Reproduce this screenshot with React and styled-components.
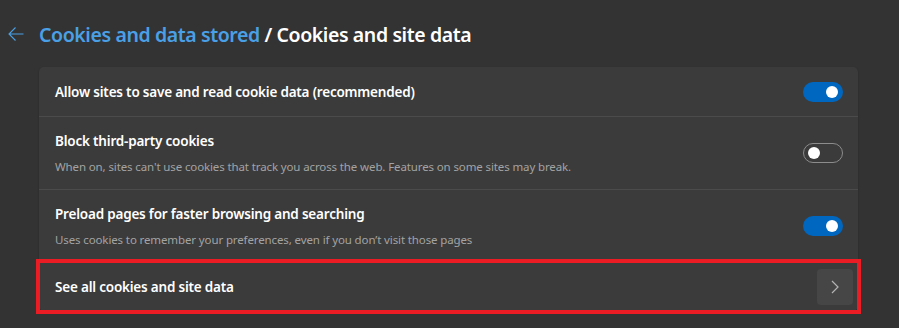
import styled, { createGlobalStyle } from 'styled-components';

const GlobalStyle = createGlobalStyle`
  html, body {
    margin: 0;
    padding: 0;
    background: #333333;
  }
  body {
    font-family: "Noto Sans", "Open Sans", sans-serif;
    color: #ffffff;
  }
`;

const Page = styled.div`
  width: 899px;
  height: 328px;
  box-sizing: border-box;
  padding: 19px 41px 0 8px;
  background: #333333;
  overflow: hidden;
`;

const Header = styled.div`
  display: flex;
  align-items: center;
  height: 30px;
  gap: 15px;
`;

const BackButton = styled.button`
  display: flex;
  align-items: center;
  justify-content: center;
  width: 16px;
  height: 16px;
  padding: 0;
  border: none;
  background: none;
  color: #4aa0e6;
  cursor: pointer;
`;

const Title = styled.h1`
  margin: 0;
  font-size: 19.5px;
  font-weight: 600;
  letter-spacing: -0.4px;
  color: #ffffff;
`;

const Crumb = styled.span`
  color: #4aa0e6;
`;

const Card = styled.div`
  margin: 18px 0 0 31px;
  background: #3b3b3b;
  border-radius: 5px;
  box-shadow: 0 1px 2px rgba(0, 0, 0, 0.25);
`;

const Row = styled.div`
  display: flex;
  align-items: center;
  justify-content: space-between;
  min-height: ${(p) => (p.$tall ? '73px' : '49px')};
  box-sizing: border-box;
  padding: 0 15px 0 16px;
  border-top: ${(p) => (p.$first ? 'none' : '1px solid #4b4b4b')};
  ${(p) => p.$highlight && `outline: 4px solid #ec1c24; outline-offset: -1px; border-top-color: transparent;`}
`;

const Text = styled.div`
  display: flex;
  flex-direction: column;
  gap: 9px;
`;

const Label = styled.div`
  font-size: 13.5px;
  font-weight: 600;
  line-height: 18px;
  letter-spacing: -0.2px;
  color: #ffffff;
`;

const Description = styled.div`
  font-size: 11.5px;
  line-height: 16px;
  letter-spacing: -0.12px;
  color: #a3a3a3;
`;

const Toggle = styled.div`
  position: relative;
  flex: none;
  width: 40px;
  height: 20px;
  box-sizing: border-box;
  border-radius: 10px;
  background: ${(p) => (p.$on ? '#0067c0' : 'transparent')};
  border: ${(p) => (p.$on ? 'none' : '1px solid #8c8c8c')};

  &::after {
    content: '';
    position: absolute;
    top: 50%;
    width: 12px;
    height: 12px;
    margin-top: -6px;
    border-radius: 50%;
    background: #ffffff;
    ${(p) => (p.$on ? 'right: 5px;' : 'left: 4px;')}
  }
`;

const ChevronButton = styled.button`
  display: flex;
  align-items: center;
  justify-content: center;
  width: 36px;
  height: 36px;
  margin-right: -10px;
  padding: 0;
  border: none;
  border-radius: 4px;
  background: #464646;
  color: #b4b4b4;
`;

const settings = [
  { label: 'Allow sites to save and read cookie data (recommended)', on: true },
  {
    label: 'Block third-party cookies',
    desc: "When on, sites can't use cookies that track you across the web. Features on some sites may break.",
    on: false,
  },
  {
    label: 'Preload pages for faster browsing and searching',
    desc: 'Uses cookies to remember your preferences, even if you don\u2019t visit those pages',
    on: true,
  },
];

export default function App() {
  return (
    <Page>
      <GlobalStyle />
      <Header>
        <BackButton aria-label="Back">
          <svg width="16" height="16" viewBox="0 0 16 16" fill="none" stroke="currentColor" strokeWidth="1.1">
            <path d="M15.5 8H1M7.5 1.5L1 8l6.5 6.5" />
          </svg>
        </BackButton>
        <Title>
          <Crumb>Cookies and data stored</Crumb> / Cookies and site data
        </Title>
      </Header>
      <Card>
        {settings.map((s, i) => (
          <Row key={s.label} $first={i === 0} $tall={!!s.desc}>
            <Text>
              <Label>{s.label}</Label>
              {s.desc && <Description>{s.desc}</Description>}
            </Text>
            <Toggle $on={s.on} />
          </Row>
        ))}
        <Row $highlight>
          <Label>See all cookies and site data</Label>
          <ChevronButton aria-label="Open">
            <svg width="8" height="14" viewBox="0 0 8 14" fill="none" stroke="currentColor" strokeWidth="1.2">
              <path d="M1 1l6 6-6 6" />
            </svg>
          </ChevronButton>
        </Row>
      </Card>
    </Page>
  );
}
